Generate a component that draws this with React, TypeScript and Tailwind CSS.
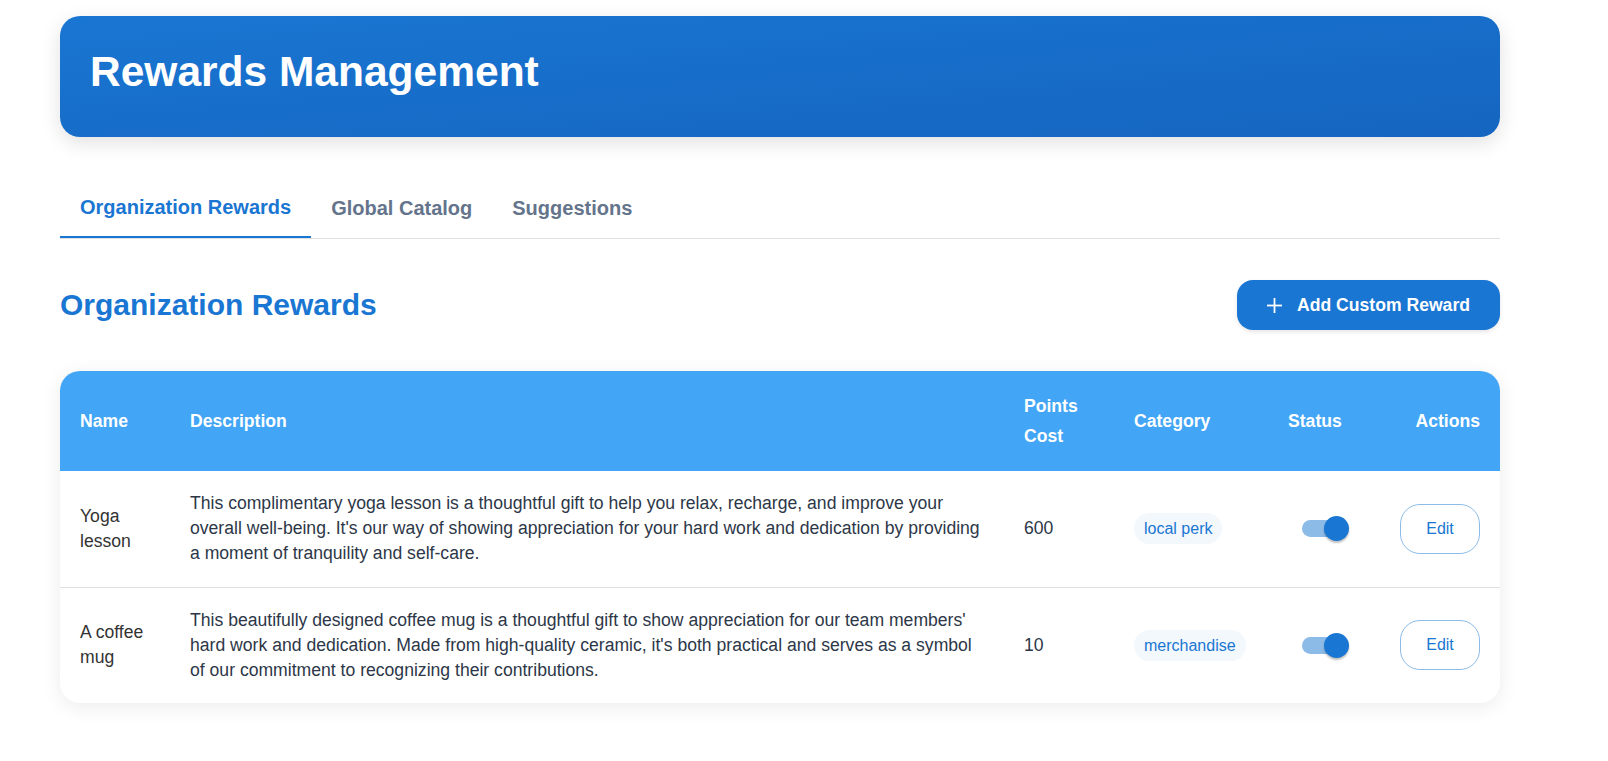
import React from 'react';

const rewards = [
  {
    name: 'Yoga lesson',
    description:
      "This complimentary yoga lesson is a thoughtful gift to help you relax, recharge, and improve your overall well-being. It's our way of showing appreciation for your hard work and dedication by providing a moment of tranquility and self-care.",
    points: 600,
    category: 'local perk',
  },
  {
    name: 'A coffee mug',
    description:
      "This beautifully designed coffee mug is a thoughtful gift to show appreciation for our team members' hard work and dedication. Made from high-quality ceramic, it's both practical and serves as a symbol of our commitment to recognizing their contributions.",
    points: 10,
    category: 'merchandise',
  },
];

function Toggle() {
  return (
    <div className="relative w-[47px] h-[25px]">
      <div className="absolute left-0 top-[4px] w-[41px] h-[17px] rounded-full bg-[#8cbbe8]" />
      <div className="absolute right-0 top-0 w-[25px] h-[25px] rounded-full bg-[#1976d2] shadow-[0_2px_2px_rgba(0,0,0,0.25)]" />
    </div>
  );
}

export default function App() {
  const tabs = ['Organization Rewards', 'Global Catalog', 'Suggestions'];

  return (
    <div className="min-h-screen bg-white font-['Liberation_Sans',Arial,sans-serif]">
      <div className="ml-[60px] w-[1440px] pt-4">
        <div className="rounded-[20px] bg-gradient-to-br from-[#1976d2] to-[#1565c0] pl-[30px] pr-8 pt-[27px] pb-[37px] shadow-[0_6px_20px_rgba(0,0,0,0.12)]">
          <h1 className="text-[42.5px] leading-[57px] font-bold text-white">Rewards Management</h1>
        </div>

        <div className="mt-[41px] flex border-b border-[#e0e0e0]">
          {tabs.map((tab, i) => (
            <button
              key={tab}
              className={
                i === 0
                  ? 'h-[60px] px-5 -mb-px border-b-2 border-[#1976d2] text-[20px] font-bold text-[#1976d2]'
                  : 'h-[60px] px-5 text-[20px] font-bold text-[#64748b]'
              }
            >
              {tab}
            </button>
          ))}
        </div>

        <div className="mt-[41px] mb-[41px] flex items-center justify-between">
          <h2 className="text-[30px] leading-9 font-bold text-[#1976d2]">Organization Rewards</h2>
          <button className="flex h-[50px] items-center gap-[15px] rounded-2xl bg-[#1976d2] px-[30px] text-[17.6px] font-bold text-white shadow-[0_2px_4px_rgba(0,0,0,0.1)]">
            <svg width="15" height="15" viewBox="0 0 15 15" fill="none" stroke="white" strokeWidth="1.8">
              <line x1="7.5" y1="0" x2="7.5" y2="15" />
              <line x1="0" y1="7.5" x2="15" y2="7.5" />
            </svg>
            Add Custom Reward
          </button>
        </div>

        <div className="overflow-hidden rounded-[20px] bg-white shadow-[0_4px_20px_rgba(0,0,0,0.08)]">
          <table className="w-full table-fixed border-collapse">
            <colgroup>
              <col className="w-[110px]" />
              <col className="w-[834px]" />
              <col className="w-[110px]" />
              <col className="w-[154px]" />
              <col className="w-[100px]" />
              <col />
            </colgroup>
            <thead>
              <tr className="bg-[#42a5f5] text-left text-[17.6px] leading-[30px] font-bold text-white">
                <th className="px-5 py-5">Name</th>
                <th className="px-5 py-5">Description</th>
                <th className="px-5 py-5">Points Cost</th>
                <th className="px-5 py-5">Category</th>
                <th className="px-5 py-5">Status</th>
                <th className="px-5 py-5 text-right">Actions</th>
              </tr>
            </thead>
            <tbody>
              {rewards.map((r, i) => (
                <tr
                  key={r.name}
                  className={i < rewards.length - 1 ? 'border-b border-[#e0e0e0]' : ''}
                >
                  <td className="px-5 py-5 text-[17.6px] leading-[25.2px] text-[#333]">{r.name}</td>
                  <td className="px-5 py-5 text-[17.6px] leading-[25.2px] text-[#2d3748]">{r.description}</td>
                  <td className="px-5 py-5 text-[17.6px] leading-[25.2px] text-[#2d3748]">{r.points}</td>
                  <td className="px-5 py-5">
                    <span className="inline-block rounded-full bg-[#f3f8fd] px-[10px] py-1 text-[16px] leading-[23px] text-[#1976d2]">
                      {r.category}
                    </span>
                  </td>
                  <td className="py-5 pl-[34px]">
                    <Toggle />
                  </td>
                  <td className="px-5 py-5 text-right">
                    <button className="h-[50px] w-20 rounded-[20px] border border-[#8cbbe8] text-[16px] text-[#1976d2]">
                      Edit
                    </button>
                  </td>
                </tr>
              ))}
            </tbody>
          </table>
        </div>
      </div>
    </div>
  );
}
